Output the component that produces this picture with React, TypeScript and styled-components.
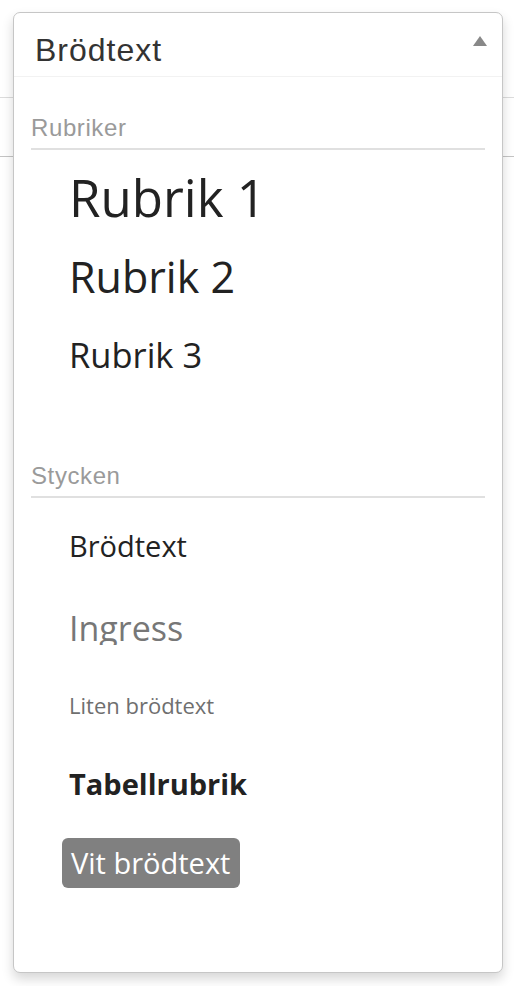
import React from 'react'
import styled, { createGlobalStyle } from 'styled-components'

const GlobalStyle = createGlobalStyle`
  html, body {
    margin: 0;
    padding: 0;
    background: #fff;
  }
  body {
    font-family: "Liberation Sans", Arial, sans-serif;
  }
`

const Page = styled.div`
  position: relative;
  width: 514px;
  height: 986px;
  overflow: hidden;
`

// toolbar strip sitting under the open dropdown
const Toolbar = styled.div`
  margin-top: 97px;
  height: 58px;
  border-top: 1px solid #dcdcdc;
  border-bottom: 1px solid #c4c4c4;
  background: #fff;
`

const Dropdown = styled.div`
  position: absolute;
  left: 13px;
  top: 12px;
  width: 490px;
  height: 961px;
  box-sizing: border-box;
  border: 1px solid #c6c6c6;
  border-radius: 7px;
  background: #fff;
  box-shadow: 0 6px 12px rgba(0, 0, 0, 0.16);
  display: flex;
  flex-direction: column;
`

const Header = styled.div`
  display: flex;
  align-items: flex-start;
  justify-content: space-between;
  height: 64px;
  box-sizing: border-box;
  padding: 10px 15px 0 21px;
  border-bottom: 1px solid #f2f2f2;
`

const Current = styled.span`
  font-size: 32px;
  line-height: 54px;
  letter-spacing: 1px;
  color: #333;
`

const Caret = styled.span`
  margin-top: 13px;
  width: 0;
  height: 0;
  border-left: 7px solid transparent;
  border-right: 7px solid transparent;
  border-bottom: 10px solid #888;
`

const Group = styled.div<{ $space: number }>`
  padding-bottom: ${p => p.$space}px;
`

const GroupLabel = styled.div<{ $top: number }>`
  margin: ${p => p.$top}px 17px 8px;
  padding-bottom: 5px;
  border-bottom: 2px solid #e0e0e0;
  font-size: 24px;
  line-height: 30px;
  letter-spacing: 0.6px;
  color: #9a9a9a;
`

const Option = styled.div<{ $size: number; $lh: number; $color?: string; $bold?: boolean }>`
  display: flex;
  padding-left: 55px;
  font-family: "Open Sans", "Noto Sans", sans-serif;
  font-size: ${p => p.$size}px;
  line-height: ${p => p.$lh}px;
  font-weight: ${p => (p.$bold ? 700 : 400)};
  color: ${p => p.$color || '#222'};
  white-space: nowrap;
`

// the lead paragraph preview is cut off right under its baseline
const Lead = styled(Option)`
  height: 34px;
  overflow: hidden;
  margin: 26px 0 20px;
`

const Pill = styled.span`
  margin: 15px 0 0 -7px;
  padding: 4px 10px 4px 9px;
  line-height: 42px;
  border-radius: 6px;
  background: #808080;
  color: #fff;
`

export default function App() {
  return (
    <Page>
      <GlobalStyle />
      <Toolbar />
      <Dropdown>
        <Header>
          <Current>Brödtext</Current>
          <Caret />
        </Header>

        <Group $space={59}>
          <GroupLabel $top={36}>Rubriker</GroupLabel>
          <Option $size={51} $lh={79}>Rubrik 1</Option>
          <Option $size={43} $lh={79}>Rubrik 2</Option>
          <Option $size={34.5} $lh={78}>Rubrik 3</Option>
        </Group>

        <Group $space={0}>
          <GroupLabel $top={8}>Stycken</GroupLabel>
          <Option $size={29} $lh={79}>Brödtext</Option>
          <Lead $size={34} $lh={34} $color="#777">Ingress</Lead>
          <Option $size={22} $lh={80} $color="#6f6f6f">Liten brödtext</Option>
          <Option $size={29} $lh={78} $bold>Tabellrubrik</Option>
          <Option $size={29} $lh={50}>
            <Pill>Vit brödtext</Pill>
          </Option>
        </Group>
      </Dropdown>
    </Page>
  )
}
